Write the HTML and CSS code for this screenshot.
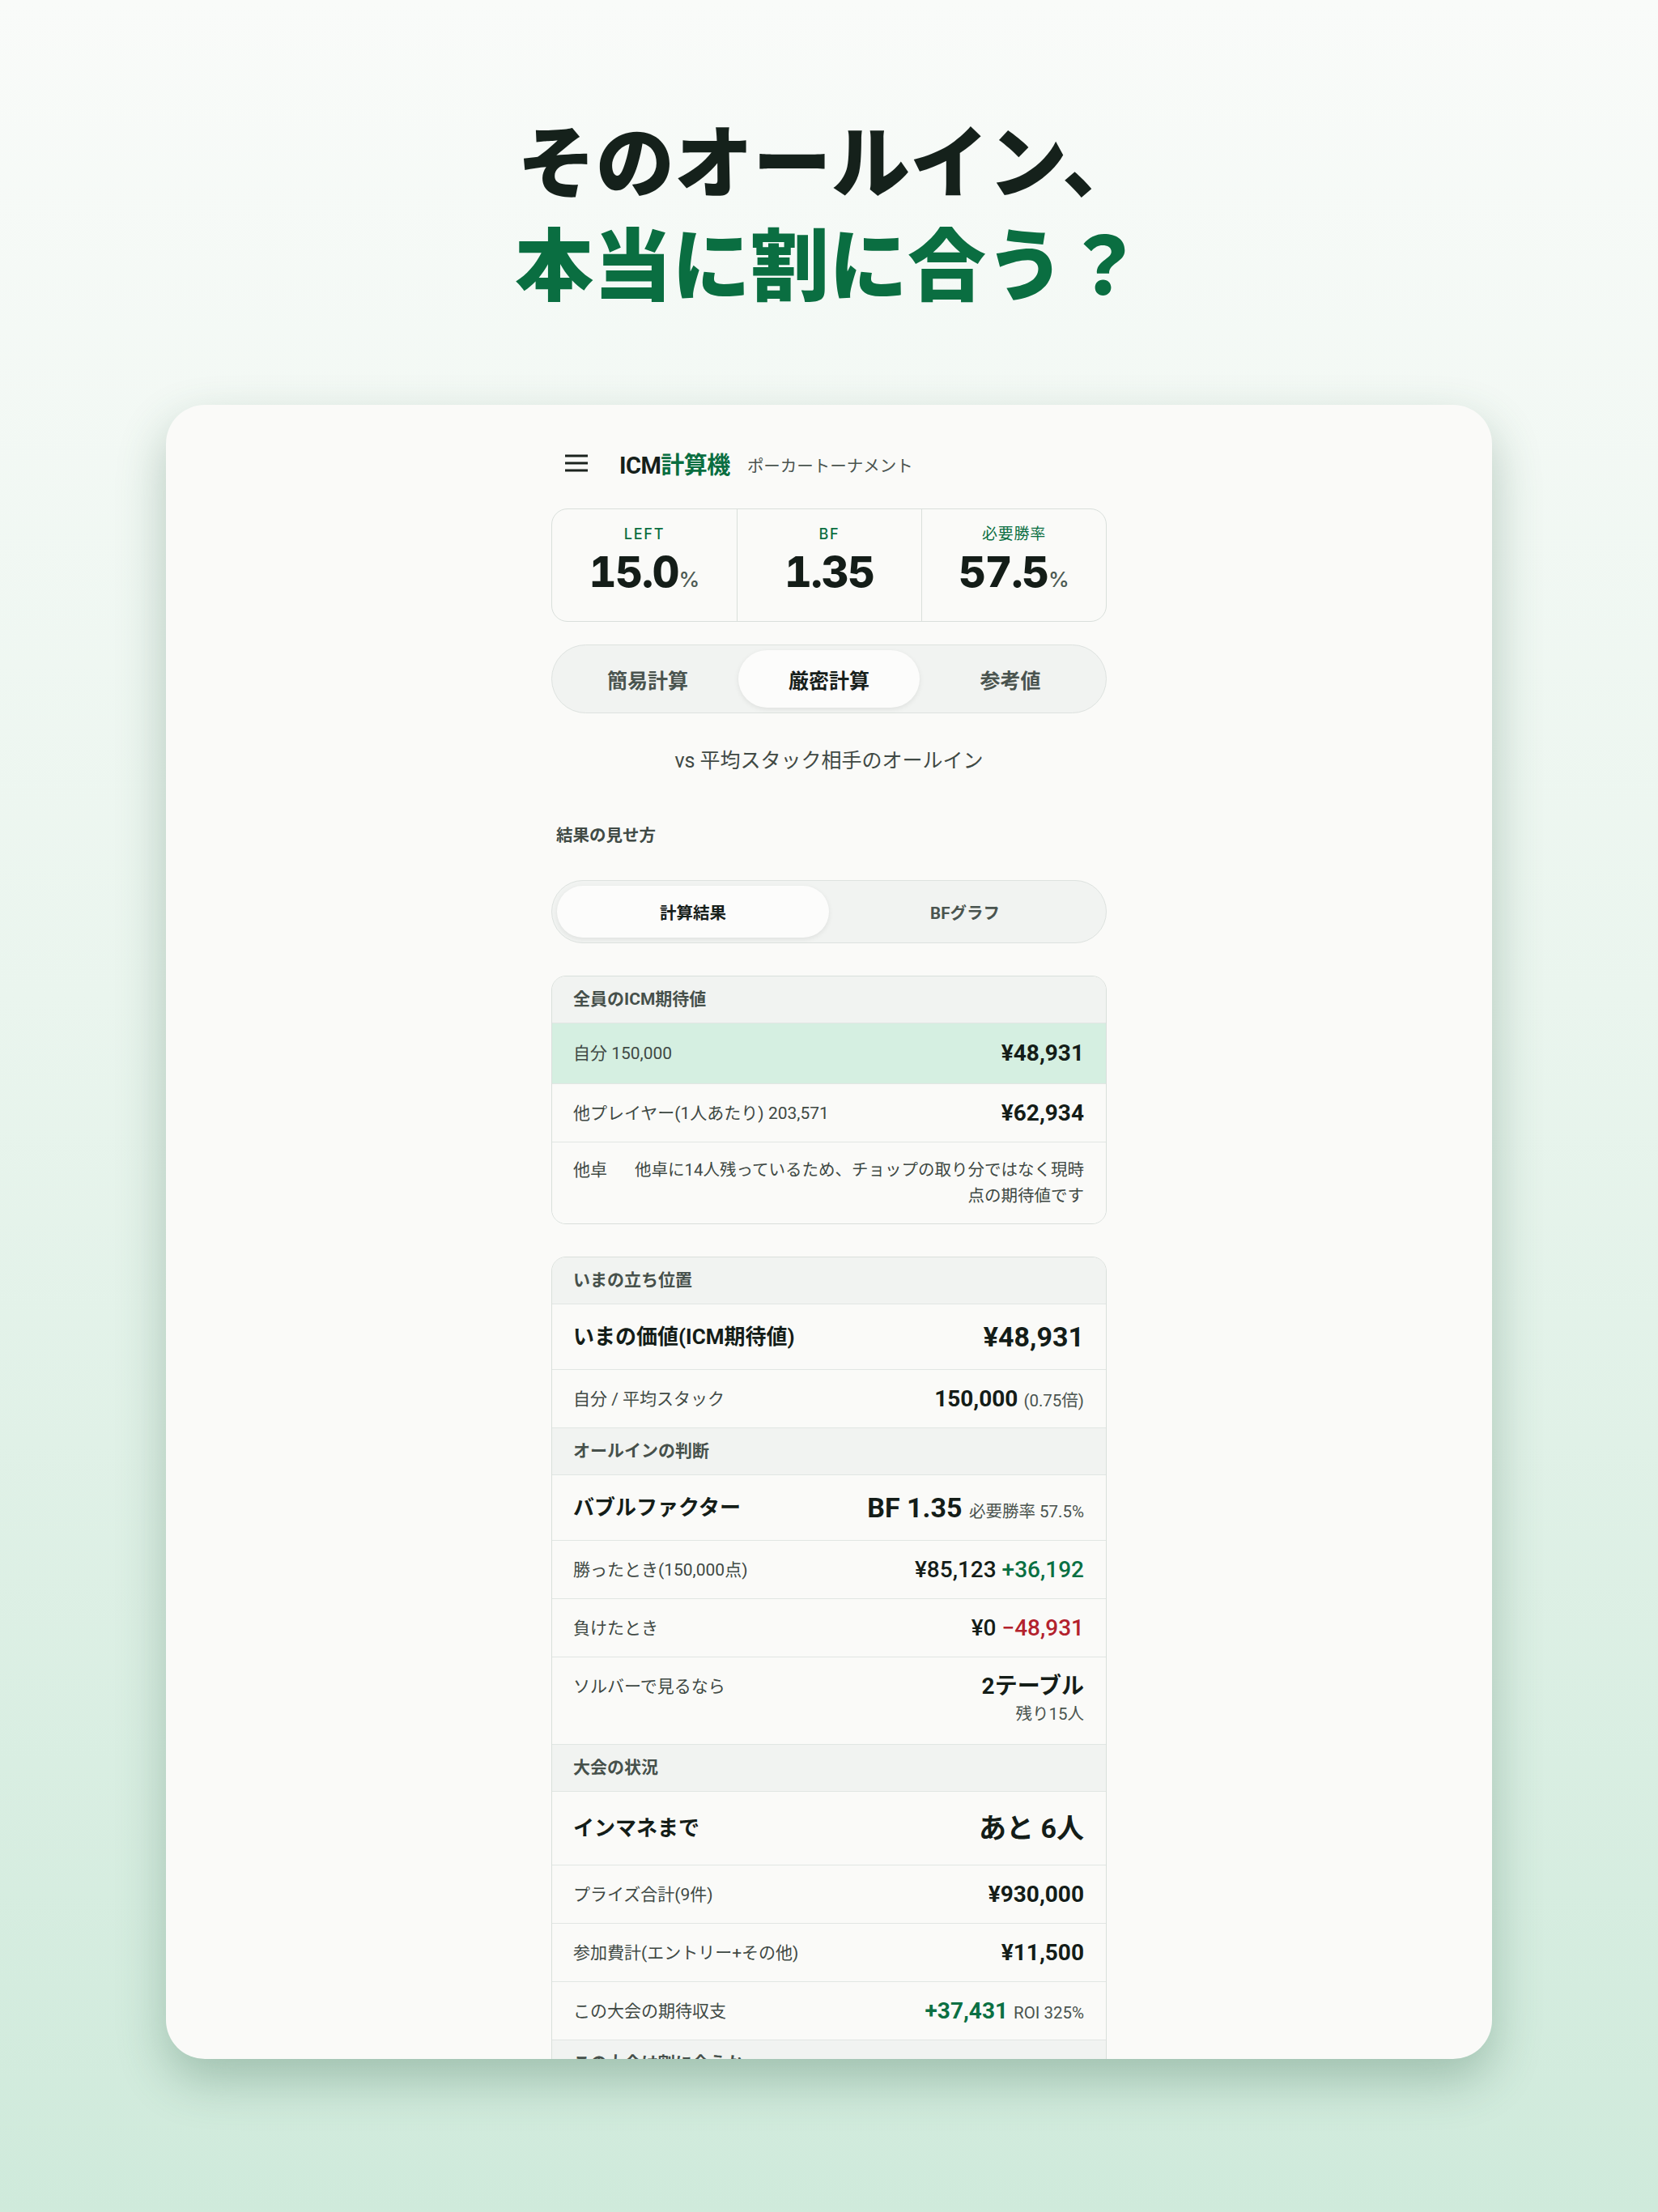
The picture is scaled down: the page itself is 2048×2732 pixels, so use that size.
FILE: index.html
```html
<!DOCTYPE html>
<html lang="ja">
<head>
    <meta charset="UTF-8">
    <meta name="viewport" content="width=device-width, initial-scale=1.0">
    <title>ICM計算機</title>
    <link rel="stylesheet" href="styles.css">
</head>
<body>
    <main class="promo">
        <h1 class="headline">
            <span class="line">そのオールイン、</span>
            <span class="line accent">本当に割に合う？</span>
        </h1>

        <div class="device">
            <div class="app">
                <!-- app bar -->
                <header class="app-bar">
                    <svg class="menu-icon" viewBox="0 0 28 22" aria-hidden="true">
                        <path d="M0 2h28M0 11h28M0 20h28" />
                    </svg>
                    <span class="brand">ICM<em>計算機</em></span>
                    <span class="brand-sub">ポーカートーナメント</span>
                </header>

                <!-- summary numbers -->
                <section class="stats">
                    <div class="stat">
                        <span class="stat-label">LEFT</span>
                        <span class="stat-value">15.0<small>%</small></span>
                    </div>
                    <div class="stat">
                        <span class="stat-label">BF</span>
                        <span class="stat-value">1.35</span>
                    </div>
                    <div class="stat">
                        <span class="stat-label jp">必要勝率</span>
                        <span class="stat-value">57.5<small>%</small></span>
                    </div>
                </section>

                <nav class="tabs">
                    <button class="tab">簡易計算</button>
                    <button class="tab active">厳密計算</button>
                    <button class="tab">参考値</button>
                </nav>

                <p class="matchup">vs 平均スタック相手のオールイン</p>

                <h2 class="section-label">結果の見せ方</h2>
                <div class="toggle">
                    <button class="toggle-item active">計算結果</button>
                    <button class="toggle-item">BFグラフ</button>
                </div>

                <!-- everyone's equity -->
                <div class="table">
                    <div class="table-head">全員のICM期待値</div>
                    <div class="row is-self">
                        <span class="label">自分 150,000</span>
                        <span class="value">¥48,931</span>
                    </div>
                    <div class="row">
                        <span class="label">他プレイヤー(1人あたり) 203,571</span>
                        <span class="value">¥62,934</span>
                    </div>
                    <div class="row row-note">
                        <span class="label">他卓</span>
                        <span class="note">他卓に14人残っているため、チョップの取り分ではなく現時点の期待値です</span>
                    </div>
                </div>

                <!-- position / decision / tournament -->
                <div class="table">
                    <div class="table-head">いまの立ち位置</div>
                    <div class="row row-lg">
                        <span class="label">いまの価値(ICM期待値)</span>
                        <span class="value">¥48,931</span>
                    </div>
                    <div class="row">
                        <span class="label">自分 / 平均スタック</span>
                        <span class="value">150,000 <span class="sub">(0.75倍)</span></span>
                    </div>

                    <div class="table-head">オールインの判断</div>
                    <div class="row row-lg">
                        <span class="label">バブルファクター</span>
                        <span class="value">BF 1.35 <span class="sub">必要勝率 57.5%</span></span>
                    </div>
                    <div class="row">
                        <span class="label">勝ったとき(150,000点)</span>
                        <span class="value medium">¥85,123 <span class="plus">+36,192</span></span>
                    </div>
                    <div class="row">
                        <span class="label">負けたとき</span>
                        <span class="value medium">¥0 <span class="minus">−48,931</span></span>
                    </div>
                    <div class="row row-top">
                        <span class="label">ソルバーで見るなら</span>
                        <span class="value stacked">2テーブル<span class="sub">残り15人</span></span>
                    </div>

                    <div class="table-head">大会の状況</div>
                    <div class="row row-lg row-xl">
                        <span class="label">インマネまで</span>
                        <span class="value">あと 6人</span>
                    </div>
                    <div class="row">
                        <span class="label">プライズ合計(9件)</span>
                        <span class="value">¥930,000</span>
                    </div>
                    <div class="row">
                        <span class="label">参加費計(エントリー+その他)</span>
                        <span class="value">¥11,500</span>
                    </div>
                    <div class="row">
                        <span class="label">この大会の期待収支</span>
                        <span class="value"><span class="plus">+37,431</span> <span class="sub">ROI 325%</span></span>
                    </div>

                    <div class="table-head">この大会は割に合うか</div>
                </div>
            </div>
        </div>
    </main>
</body>
</html>
```

FILE: styles.css
```css
* {
    box-sizing: border-box;
}
body {
    margin: 0;
    width: 2048px;
    height: 2732px;
    overflow: hidden;
    font-family: "Roboto", "Noto Sans CJK JP", sans-serif;
    color: #17201b;
    background: linear-gradient(180deg, #f9fbf9 0%, #eaf5ee 45%, #cfeadb 100%);
}
button {
    font: inherit;
    border: 0;
    background: none;
    padding: 0;
    color: inherit;
}

.promo {
    padding-top: 130px;
}

/* headline */
.headline {
    margin: 0;
    text-align: center;
    font-family: "Noto Sans CJK JP", sans-serif;
    font-weight: 900;
    font-size: 97px;
    line-height: 127px;
    color: #15211b;
}
.headline .line {
    display: block;
}
.headline .accent {
    color: #0a6e41;
}

/* tablet frame */
.device {
    width: 1638px;
    height: 2043px;
    margin: 116px auto 0;
    background: #fafaf8;
    border-radius: 48px;
    overflow: hidden;
    box-shadow: 0 26px 60px rgba(50, 100, 75, 0.32);
}
.app {
    width: 686px;
    margin: 0 auto;
    padding-top: 52px;
}

/* app bar */
.app-bar {
    display: flex;
    align-items: center;
    height: 40px;
    padding-left: 17px;
    margin-bottom: 36px;
}
.menu-icon {
    width: 28px;
    height: 22px;
    stroke: #1b231e;
    stroke-width: 3;
    fill: none;
    margin-right: 39px;
}
.brand {
    font-weight: 700;
    font-size: 29px;
    letter-spacing: -0.5px;
    color: #15201a;
}
.brand em {
    font-style: normal;
    color: #0a6e41;
}
.brand-sub {
    margin-left: 21px;
    font-size: 20.5px;
    color: #4a544f;
    padding-top: 4px;
}

/* summary numbers */
.stats {
    display: grid;
    grid-template-columns: repeat(3, 1fr);
    border: 1.5px solid #d9dfdb;
    border-radius: 20px;
    margin-bottom: 28px;
}
.stat {
    display: flex;
    flex-direction: column;
    align-items: center;
    padding: 19px 0 25px;
    gap: 9px;
}
.stat + .stat {
    border-left: 1.5px solid #d9dfdb;
}
.stat-label {
    font-family: "Inter", "Noto Sans CJK JP", sans-serif;
    font-weight: 500;
    font-size: 18px;
    line-height: 24px;
    letter-spacing: 0.1em;
    color: #0a6e41;
}
.stat-label.jp {
    font-weight: 400;
    font-size: 19px;
    letter-spacing: 0.04em;
}
.stat-value {
    font-family: "Inter", sans-serif;
    font-weight: 800;
    font-size: 52px;
    line-height: 52px;
    letter-spacing: -1px;
    font-variant-numeric: tabular-nums;
    color: #141d18;
}
.stat-value small {
    font-size: 26px;
    font-weight: 500;
    letter-spacing: 0;
    color: #4d5a53;
}

/* calculation mode tabs */
.tabs {
    display: grid;
    grid-template-columns: repeat(3, 1fr);
    padding: 6px;
    height: 85px;
    border: 1.5px solid #dde2df;
    border-radius: 43px;
    background: #f1f3f1;
}
.tab {
    border-radius: 36px;
    font-size: 25px;
    font-weight: 700;
    color: #4a544f;
}
.tab.active {
    background: #fcfcfb;
    color: #17201b;
    box-shadow: 0 2px 6px rgba(0, 0, 0, 0.08);
}

.matchup {
    margin: 41px 0 0;
    text-align: center;
    font-size: 25px;
    line-height: 36px;
    color: #3f4944;
}

.section-label {
    margin: 59px 0 0 6px;
    font-size: 20.5px;
    line-height: 30px;
    font-weight: 700;
    color: #414b46;
}

/* result view toggle */
.toggle {
    display: grid;
    grid-template-columns: 1fr 1fr;
    height: 78px;
    margin-top: 40px;
    padding: 6px;
    border: 1.5px solid #dde2df;
    border-radius: 39px;
    background: #f1f3f1;
}
.toggle-item {
    border-radius: 32px;
    font-size: 20.5px;
    font-weight: 700;
    color: #4a544f;
}
.toggle-item.active {
    background: #fcfcfb;
    color: #17201b;
    box-shadow: 0 2px 6px rgba(0, 0, 0, 0.08);
}

/* result tables */
.table {
    margin-top: 40px;
    border: 1.5px solid #d9dfdb;
    border-radius: 18px;
    overflow: hidden;
}
.table-head {
    padding: 17px 26px 18px;
    font-size: 21px;
    line-height: 22px;
    font-weight: 700;
    color: #46504b;
    background: #f1f3f1;
    border-bottom: 1.5px solid #e1e6e3;
}
.table-head:last-child {
    border-bottom: 0;
}
.row {
    display: flex;
    align-items: center;
    justify-content: space-between;
    gap: 30px;
    padding: 18px 27px 17px 26px;
    border-bottom: 1.5px solid #e1e6e3;
    background: #fafaf8;
}
.row:last-child {
    border-bottom: 0;
}
.row.is-self {
    background: #d5efe1;
    padding-top: 19px;
    padding-bottom: 19px;
}
.label {
    font-size: 21px;
    line-height: 36px;
    color: #3f4944;
}
.value {
    font-size: 28px;
    line-height: 36px;
    font-weight: 700;
    color: #141d18;
    white-space: nowrap;
}
.value.medium {
    font-weight: 500;
}
.value .sub {
    font-size: 20.5px;
    line-height: 1;
    font-weight: 400;
    color: #4a544f;
}
.plus {
    color: #0a7043;
}
.minus {
    color: #b3222d;
}

.row-lg {
    padding-top: 22px;
    padding-bottom: 22px;
}
.row-lg .label {
    font-size: 26px;
    font-weight: 700;
    color: #141d18;
}
.row-lg .value {
    font-size: 34px;
}
.row-xl {
    padding-top: 27px;
    padding-bottom: 27px;
}

.row-note {
    align-items: flex-start;
    gap: 24px;
    padding-bottom: 18px;
}
.row-note .label {
    line-height: 32px;
    white-space: nowrap;
}
.note {
    flex: 1;
    text-align: right;
    font-size: 20.5px;
    line-height: 32px;
    color: #3f4944;
}

.row-top {
    align-items: flex-start;
    padding-bottom: 21px;
}
.value.stacked {
    display: flex;
    flex-direction: column;
    align-items: flex-end;
}
.value.stacked .sub {
    line-height: 32px;
}
```
